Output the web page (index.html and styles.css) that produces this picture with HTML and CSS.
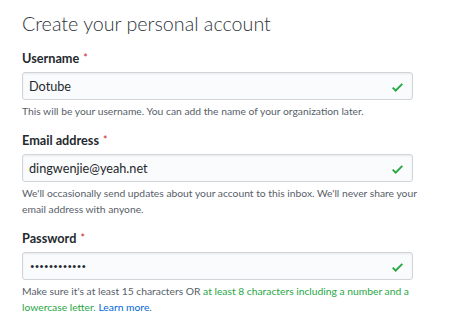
FILE: index.html
```html
<!DOCTYPE html>
<html>
<head>
<meta charset="utf-8">
<link rel="stylesheet" href="styles.css">
</head>
<body>
<div class="page">
  <h1 class="title">Create your personal account</h1>
  <div class="field">
    <label class="label">Username <span class="req">*</span></label>
    <div class="input">
      <span class="value">Dotube</span>
      <svg class="check" viewBox="0 0 12 16" width="11" height="14.7"><path fill="#28a745" d="M12 5l-8 8-4-4 1.5-1.5L4 10l6.5-6.5L12 5z"/></svg>
    </div>
    <p class="note">This will be your username. You can add the name of your organization later.</p>
  </div>
  <div class="field">
    <label class="label">Email address <span class="req">*</span></label>
    <div class="input">
      <span class="value">dingwenjie@yeah.net</span>
      <svg class="check" viewBox="0 0 12 16" width="11" height="14.7"><path fill="#28a745" d="M12 5l-8 8-4-4 1.5-1.5L4 10l6.5-6.5L12 5z"/></svg>
    </div>
    <p class="note">We'll occasionally send updates about your account to this inbox. We'll never share your email address with anyone.</p>
  </div>
  <div class="field">
    <label class="label">Password <span class="req">*</span></label>
    <div class="input">
      <span class="value dots">••••••••••••</span>
      <svg class="check" viewBox="0 0 12 16" width="11" height="14.7"><path fill="#28a745" d="M12 5l-8 8-4-4 1.5-1.5L4 10l6.5-6.5L12 5z"/></svg>
    </div>
    <p class="note">Make sure it's at least 15 characters OR <span class="ok">at least 8 characters including a number and a lowercase letter.</span> <a class="link">Learn more</a>.</p>
  </div>
</div>
</body>
</html>
```
FILE: styles.css
```css
html, body {
  margin: 0;
  padding: 0;
  background: #fff;
}
.page {
  width: 391px;
  padding: 12px 0 0 22px;
  font-family: Lato, "Noto Sans", sans-serif;
  color: #24292e;
}
.title {
  margin: 0 0 14px;
  font-size: 19.7px;
  font-weight: 300;
  line-height: 24px;
  color: #2f353a;
}
.field {
  margin-bottom: 13px;
}
.label {
  display: block;
  font-size: 12.7px;
  font-weight: 700;
  line-height: 16px;
  margin-bottom: 6px;
}
.req {
  margin-left: 1px;
  color: #cb2431;
  font-weight: 400;
  font-size: 10.5px;
  vertical-align: 1px;
}
.input {
  display: flex;
  align-items: center;
  justify-content: space-between;
  height: 28px;
  box-sizing: border-box;
  border: 1px solid #d1d5da;
  border-radius: 3px;
  background: #fafbfc;
  padding: 0 9px 0 6px;
  box-shadow: inset 0 1px 2px rgba(27,31,35,0.075);
}
.value {
  font-size: 12.7px;
  line-height: 15px;
  color: #24292e;
}
.dots {
  font-size: 7.8px;
  letter-spacing: 0.15px;
  padding-left: 1px;
}
.check {
  display: block;
  margin-top: 3px;
}
.note {
  width: 400px;
  margin: 3px 0 0;
  font-size: 10.3px;
  line-height: 16px;
  color: #586069;
}
.ok {
  color: #28a745;
}
.link {
  color: #0366d6;
}
```
